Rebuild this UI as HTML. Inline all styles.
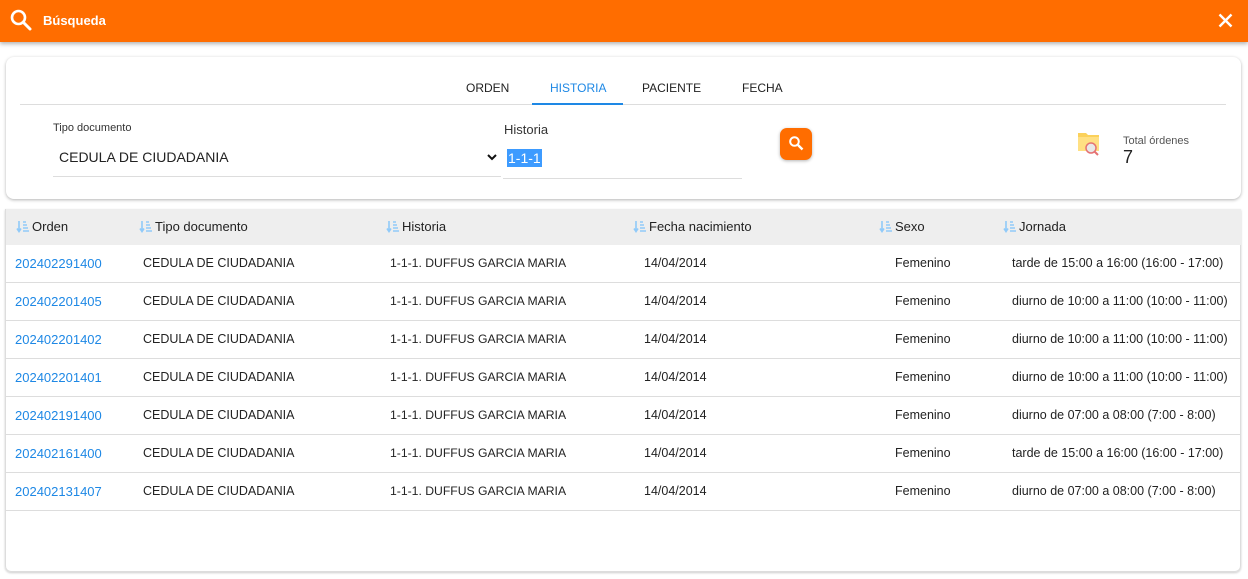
<!DOCTYPE html>
<html><head><meta charset="utf-8"><style>
*{box-sizing:border-box;margin:0;padding:0}
body{width:1248px;height:579px;overflow:hidden;background:#fff;font-family:"Liberation Sans",sans-serif;color:#222;position:relative}
.hdr{position:absolute;left:0;top:0;width:1248px;height:42px;background:#ff6d00;box-shadow:0 2px 4px rgba(0,0,0,.3)}
.hdr .t{position:absolute;left:43px;top:13px;color:#fff;font-weight:bold;font-size:13px}
.card{position:absolute;left:6px;top:57px;width:1235px;height:142px;background:#fff;border-radius:8px;box-shadow:0 1px 3px rgba(0,0,0,.3)}
.tabs{position:absolute;left:14px;top:47px;width:1206px;border-bottom:1px solid #ddd;height:1px}
.tab{position:absolute;top:24px;font-size:12px;color:#222}
.lbl{position:absolute;font-size:11px;color:#333}
.abs{position:absolute}
.tbl{position:absolute;left:5px;top:209px;width:1236px;height:363px;border:1px solid #ddd;border-top:none;border-radius:0 0 6px 6px;box-shadow:0 1px 2px rgba(0,0,0,.2)}
.th{position:absolute;left:0;top:0;width:1235px;height:36px;background:#eee}
.c{position:absolute;font-size:13px;white-space:nowrap}
.row{position:absolute;left:0;width:1235px;height:38px;border-bottom:1px solid #ddd}
.row .c{top:11px;font-size:12.5px;color:#222}
.row .o{color:#1e88e5;font-size:13px}
.row .h{font-size:12.2px}
.ic{display:inline-block;width:13px;height:13px;vertical-align:-2px;margin-right:3px}
</style></head><body>
<div class="hdr">
<svg class="abs" style="left:9px;top:8px" width="24" height="24" viewBox="0 0 24 24"><circle cx="9.5" cy="9.5" r="6.5" fill="none" stroke="#fff" stroke-width="2.6"/><path d="M14.5 14.5L21 21" stroke="#fff" stroke-width="3" stroke-linecap="round"/></svg>
<div class="t">Búsqueda</div>
<svg class="abs" style="left:1218px;top:13px" width="15" height="15" viewBox="0 0 15 15"><path d="M1.5 1.5L13.5 13.5M13.5 1.5L1.5 13.5" stroke="#fff" stroke-width="2.4"/></svg>
</div>
<div class="card">
<div class="tabs"></div>
<div class="tab" style="left:460px">ORDEN</div>
<div class="tab" style="left:544px;color:#1e88e5">HISTORIA</div>
<div class="abs" style="left:526px;top:46px;width:91px;height:2px;background:#1e88e5"></div>
<div class="tab" style="left:636px">PACIENTE</div>
<div class="tab" style="left:736px">FECHA</div>
<div class="lbl" style="left:47px;top:65px">Tipo documento</div>
<div class="abs" style="left:53px;top:92px;font-size:14px">CEDULA DE CIUDADANIA</div>
<svg class="abs" style="left:481px;top:96px" width="10" height="8" viewBox="0 0 10 8"><path d="M1 2L5 6L9 2" stroke="#111" stroke-width="2" fill="none"/></svg>
<div class="abs" style="left:47px;top:119px;width:448px;height:1px;background:#ddd"></div>
<div class="lbl" style="left:498px;top:65px;font-size:13px">Historia</div>
<div class="abs" style="left:501px;top:92px;background:#3d9bff;color:#fff;font-size:14px;padding:0 1px;height:18px;line-height:18px">1-1-1</div>
<div class="abs" style="left:497px;top:121px;width:239px;height:1px;background:#ddd"></div>
<div class="abs" style="left:774px;top:71px;width:32px;height:32px;border-radius:7px;background:#ff6d00;box-shadow:0 1px 3px rgba(0,0,0,.3)">
<svg class="abs" style="left:8px;top:7px" width="17" height="17" viewBox="0 0 17 17"><circle cx="6.5" cy="6.5" r="4.3" fill="none" stroke="#fff" stroke-width="2"/><path d="M10 10L14.5 14.5" stroke="#fff" stroke-width="2.4"/></svg></div>
<svg class="abs" style="left:1071px;top:74px" width="24" height="26" viewBox="0 0 24 26"><path d="M1 2h8l2 2h11v16H1z" fill="#fbd15b"/><path d="M1 6h21v14H1z" fill="#ffe083"/><circle cx="14" cy="17" r="5" fill="#e8e8e8" stroke="#e57373" stroke-width="1.5"/><path d="M17.5 20.5L21 24" stroke="#e57373" stroke-width="2"/></svg>
<div class="abs" style="left:1117px;top:78px;font-size:11px;color:#555">Total órdenes</div>
<div class="abs" style="left:1117px;top:90px;font-size:18px;color:#222">7</div>
</div>
<div class="tbl">
<div class="th">
<div class="c" style="left:10px;top:10px"><svg class="ic" viewBox="0 0 13 13"><path d="M3 1v10M1 8.5l2 3 2-3M7 2h3M7 5h4M7 8h5M7 11h6" stroke="#90caf9" stroke-width="1.6" fill="none"/></svg>Orden</div>
<div class="c" style="left:133px;top:10px"><svg class="ic" viewBox="0 0 13 13"><path d="M3 1v10M1 8.5l2 3 2-3M7 2h3M7 5h4M7 8h5M7 11h6" stroke="#90caf9" stroke-width="1.6" fill="none"/></svg>Tipo documento</div>
<div class="c" style="left:380px;top:10px"><svg class="ic" viewBox="0 0 13 13"><path d="M3 1v10M1 8.5l2 3 2-3M7 2h3M7 5h4M7 8h5M7 11h6" stroke="#90caf9" stroke-width="1.6" fill="none"/></svg>Historia</div>
<div class="c" style="left:627px;top:10px"><svg class="ic" viewBox="0 0 13 13"><path d="M3 1v10M1 8.5l2 3 2-3M7 2h3M7 5h4M7 8h5M7 11h6" stroke="#90caf9" stroke-width="1.6" fill="none"/></svg>Fecha nacimiento</div>
<div class="c" style="left:873px;top:10px"><svg class="ic" viewBox="0 0 13 13"><path d="M3 1v10M1 8.5l2 3 2-3M7 2h3M7 5h4M7 8h5M7 11h6" stroke="#90caf9" stroke-width="1.6" fill="none"/></svg>Sexo</div>
<div class="c" style="left:997px;top:10px"><svg class="ic" viewBox="0 0 13 13"><path d="M3 1v10M1 8.5l2 3 2-3M7 2h3M7 5h4M7 8h5M7 11h6" stroke="#90caf9" stroke-width="1.6" fill="none"/></svg>Jornada</div>
</div>
<div class="row" style="top:36px"><div class="c o" style="left:9px">202402291400</div><div class="c" style="left:137px">CEDULA DE CIUDADANIA</div><div class="c h" style="left:384px">1-1-1. DUFFUS GARCIA MARIA</div><div class="c" style="left:638px">14/04/2014</div><div class="c" style="left:889px">Femenino</div><div class="c" style="left:1006px">tarde de 15:00 a 16:00 (16:00 - 17:00)</div></div>
<div class="row" style="top:74px"><div class="c o" style="left:9px">202402201405</div><div class="c" style="left:137px">CEDULA DE CIUDADANIA</div><div class="c h" style="left:384px">1-1-1. DUFFUS GARCIA MARIA</div><div class="c" style="left:638px">14/04/2014</div><div class="c" style="left:889px">Femenino</div><div class="c" style="left:1006px">diurno de 10:00 a 11:00 (10:00 - 11:00)</div></div>
<div class="row" style="top:112px"><div class="c o" style="left:9px">202402201402</div><div class="c" style="left:137px">CEDULA DE CIUDADANIA</div><div class="c h" style="left:384px">1-1-1. DUFFUS GARCIA MARIA</div><div class="c" style="left:638px">14/04/2014</div><div class="c" style="left:889px">Femenino</div><div class="c" style="left:1006px">diurno de 10:00 a 11:00 (10:00 - 11:00)</div></div>
<div class="row" style="top:150px"><div class="c o" style="left:9px">202402201401</div><div class="c" style="left:137px">CEDULA DE CIUDADANIA</div><div class="c h" style="left:384px">1-1-1. DUFFUS GARCIA MARIA</div><div class="c" style="left:638px">14/04/2014</div><div class="c" style="left:889px">Femenino</div><div class="c" style="left:1006px">diurno de 10:00 a 11:00 (10:00 - 11:00)</div></div>
<div class="row" style="top:188px"><div class="c o" style="left:9px">202402191400</div><div class="c" style="left:137px">CEDULA DE CIUDADANIA</div><div class="c h" style="left:384px">1-1-1. DUFFUS GARCIA MARIA</div><div class="c" style="left:638px">14/04/2014</div><div class="c" style="left:889px">Femenino</div><div class="c" style="left:1006px">diurno de 07:00 a 08:00 (7:00 - 8:00)</div></div>
<div class="row" style="top:226px"><div class="c o" style="left:9px">202402161400</div><div class="c" style="left:137px">CEDULA DE CIUDADANIA</div><div class="c h" style="left:384px">1-1-1. DUFFUS GARCIA MARIA</div><div class="c" style="left:638px">14/04/2014</div><div class="c" style="left:889px">Femenino</div><div class="c" style="left:1006px">tarde de 15:00 a 16:00 (16:00 - 17:00)</div></div>
<div class="row" style="top:264px"><div class="c o" style="left:9px">202402131407</div><div class="c" style="left:137px">CEDULA DE CIUDADANIA</div><div class="c h" style="left:384px">1-1-1. DUFFUS GARCIA MARIA</div><div class="c" style="left:638px">14/04/2014</div><div class="c" style="left:889px">Femenino</div><div class="c" style="left:1006px">diurno de 07:00 a 08:00 (7:00 - 8:00)</div></div>
</div>
</body></html>
